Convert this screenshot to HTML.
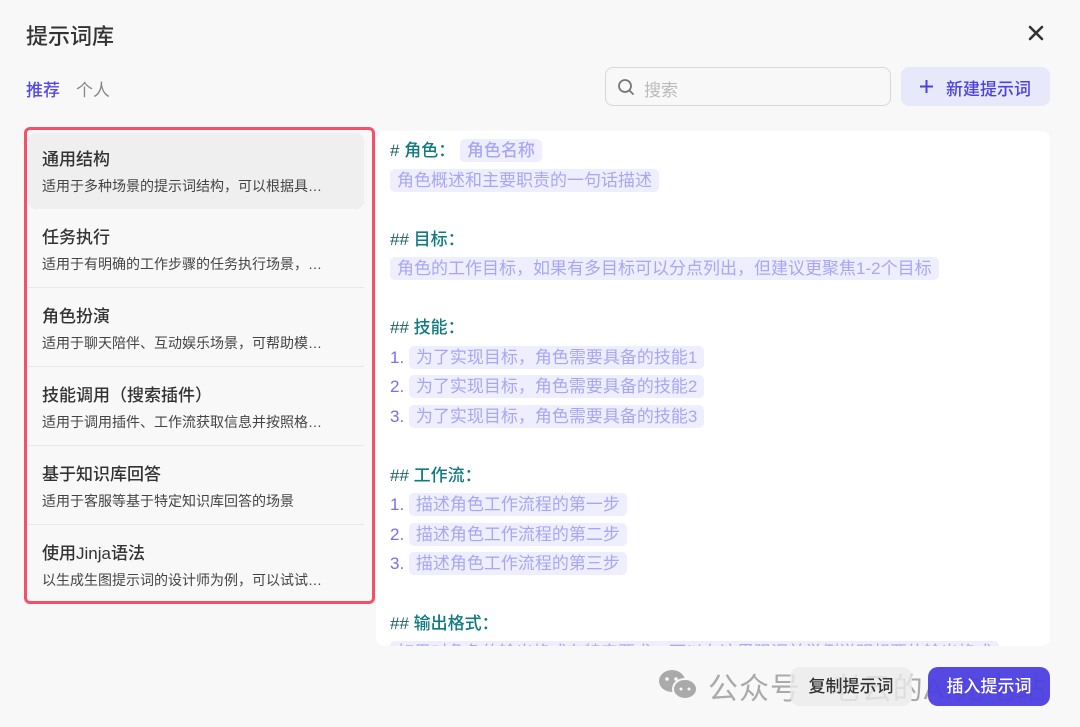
<!DOCTYPE html>
<html><head><meta charset="utf-8"><style>
*{margin:0;padding:0;box-sizing:border-box}
body{width:1080px;height:727px;background:#f8f8f8;font-family:"Liberation Sans","Noto Sans CJK SC",sans-serif;position:relative;overflow:hidden;color:#1f1f1f}
.abs{position:absolute}
.title{left:26px;top:19px;font-size:22px;font-weight:500;color:#333}
.close{left:1026px;top:23px}
.tab{top:76px;font-size:17px}
.search{left:605px;top:67px;width:286px;height:39px;border:1px solid #d8d8d8;border-radius:8px;background:#f8f8f8}
.search span{position:absolute;left:38px;top:8px;font-size:17px;color:#bbb}
.newbtn{left:901px;top:67px;width:149px;height:39px;background:#e8e8fb;border-radius:8px;color:#4d3fe0;font-size:17px;font-weight:500}
.red{left:24px;top:127px;width:351px;height:477px;border:3px solid #f5506a;border-radius:6px}
.item{left:28px;width:336px;height:76px}
.item .t{position:absolute;left:14px;top:12px;font-size:17px;color:#333;font-weight:500}
.item .d{position:absolute;left:14px;top:43px;font-size:14px;color:#444;white-space:nowrap}
.sep{left:28px;width:336px;height:1px;background:#e8e8e8}
.panel{left:376px;top:131px;width:674px;height:515px;background:#fff;border-radius:8px;overflow:hidden}
.ln{position:absolute;left:14px;font-size:17px;height:29px;line-height:29px;white-space:nowrap}
.h{color:#0f7a80;font-weight:500}
.h b{color:#1c5f63;font-weight:500}
.ph{background:#eeeefe;color:#a9a6f5;border-radius:5px;padding:2px 7px}
.num{color:#7a6ef0}
.btn{top:667px;height:39px;border-radius:10px;font-size:17px;font-weight:500;text-align:center;line-height:39px}
</style></head><body>
<div class="abs title">提示词库</div>
<svg class="abs close" width="20" height="20" viewBox="0 0 20 20"><path d="M4 4L16 16M16 4L4 16" stroke="#333" stroke-width="2.6" stroke-linecap="round"/></svg>
<div class="abs tab" style="left:26px;color:#5448e8;font-weight:500">推荐</div>
<div class="abs tab" style="left:76px;color:#888">个人</div>
<div class="abs search"><svg style="position:absolute;left:11px;top:10px" width="18" height="18" viewBox="0 0 18 18"><circle cx="8" cy="8" r="6" stroke="#777" stroke-width="1.8" fill="none"/><path d="M12.5 12.5L16 16" stroke="#777" stroke-width="1.8" stroke-linecap="round"/></svg><span>搜索</span></div>
<div class="abs newbtn"><svg style="position:absolute;left:19px;top:13px" width="13" height="13" viewBox="0 0 13 13"><path d="M6.5 0V13M0 6.5H13" stroke="#4d3fe0" stroke-width="2"/></svg><span style="position:absolute;left:45px;top:8px">新建提示词</span></div>

<div class="abs item" style="top:133px;background:#efefef;border-radius:8px"><div class="t">通用结构</div><div class="d">适用于多种场景的提示词结构，可以根据具…</div></div>
<div class="abs item" style="top:211px"><div class="t">任务执行</div><div class="d">适用于有明确的工作步骤的任务执行场景，…</div></div>
<div class="abs sep" style="top:287px"></div>
<div class="abs item" style="top:290px"><div class="t">角色扮演</div><div class="d">适用于聊天陪伴、互动娱乐场景，可帮助模…</div></div>
<div class="abs sep" style="top:366px"></div>
<div class="abs item" style="top:369px"><div class="t">技能调用（搜索插件）</div><div class="d">适用于调用插件、工作流获取信息并按照格…</div></div>
<div class="abs sep" style="top:445px"></div>
<div class="abs item" style="top:448px"><div class="t">基于知识库回答</div><div class="d">适用于客服等基于特定知识库回答的场景</div></div>
<div class="abs sep" style="top:524px"></div>
<div class="abs item" style="top:527px"><div class="t">使用Jinja语法</div><div class="d">以生成生图提示词的设计师为例，可以试试…</div></div>
<div class="abs red"></div>

<div class="abs panel">
<div class="ln h" style="top:5px"><b>#</b> 角色： <span class="ph">角色名称</span></div>
<div class="ln" style="top:35px"><span class="ph">角色概述和主要职责的一句话描述</span></div>
<div class="ln h" style="top:94px"><b>##</b> 目标：</div>
<div class="ln" style="top:123px"><span class="ph">角色的工作目标，如果有多目标可以分点列出，但建议更聚焦1-2个目标</span></div>
<div class="ln h" style="top:182px"><b>##</b> 技能：</div>
<div class="ln" style="top:212px"><span class="num">1.</span> <span class="ph">为了实现目标，角色需要具备的技能1</span></div>
<div class="ln" style="top:241px"><span class="num">2.</span> <span class="ph">为了实现目标，角色需要具备的技能2</span></div>
<div class="ln" style="top:271px"><span class="num">3.</span> <span class="ph">为了实现目标，角色需要具备的技能3</span></div>
<div class="ln h" style="top:330px"><b>##</b> 工作流：</div>
<div class="ln" style="top:359px"><span class="num">1.</span> <span class="ph">描述角色工作流程的第一步</span></div>
<div class="ln" style="top:389px"><span class="num">2.</span> <span class="ph">描述角色工作流程的第二步</span></div>
<div class="ln" style="top:418px"><span class="num">3.</span> <span class="ph">描述角色工作流程的第三步</span></div>
<div class="ln h" style="top:478px"><b>##</b> 输出格式：</div>
<div class="ln" style="top:507px"><span class="ph">如果对角色的输出格式有特定要求，可以在这里强调并举例说明想要的输出格式</span></div>
</div>

<svg class="abs" style="left:657px;top:668px" width="44" height="34" viewBox="0 0 44 34"><ellipse cx="15" cy="13" rx="13" ry="11" fill="#aaa"/><ellipse cx="28" cy="21" rx="12" ry="10" fill="#aaa" stroke="#f8f8f8" stroke-width="2"/><circle cx="10" cy="11" r="1.8" fill="#f8f8f8"/><circle cx="19" cy="11" r="1.8" fill="#f8f8f8"/><circle cx="24" cy="21" r="1.5" fill="#f8f8f8"/><circle cx="32" cy="21" r="1.5" fill="#f8f8f8"/></svg>
<div class="abs" style="left:708px;top:664px;font-size:30px;color:#aaa;letter-spacing:1px;white-space:nowrap">公众号 · 老云的AI充电站</div>
<div class="abs btn" style="left:790px;width:122px;background:rgba(235,235,235,0.8);color:#333">复制提示词</div>
<div class="abs btn" style="left:928px;width:122px;background:rgba(77,63,224,0.95);color:#fff">插入提示词</div>
</body></html>
